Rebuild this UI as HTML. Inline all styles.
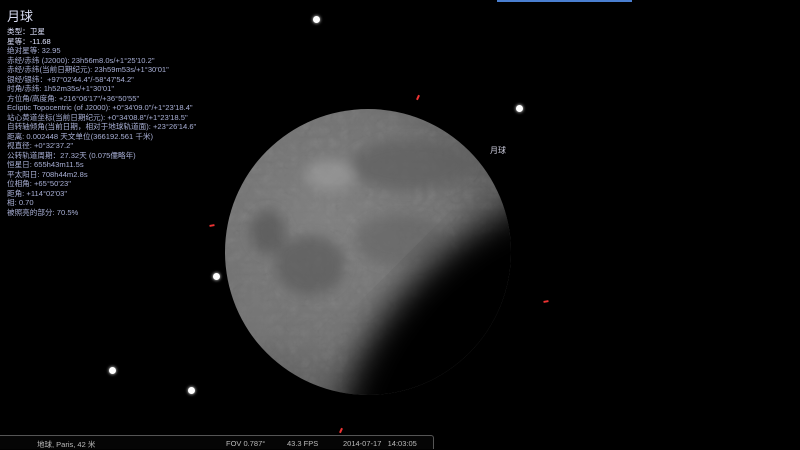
<!DOCTYPE html>
<html><head><meta charset="utf-8"><style>
html,body{margin:0;padding:0;background:#000;width:800px;height:450px;overflow:hidden;position:relative;font-family:"Liberation Sans","Noto Sans CJK SC",sans-serif}
svg{display:block}
#info{position:absolute;left:7px;top:27px;color:#a9b0d6;font-size:7.6px;line-height:9.5px;white-space:nowrap}
#info b{color:#dfe3ff;font-weight:normal}
#title{position:absolute;left:7px;top:6px;color:#d8dcf2;font-size:13px}
.star{position:absolute;width:7px;height:7px;border-radius:50%;background:#fff;box-shadow:0 0 3px #fff}
.red{position:absolute;width:2px;height:5px;background:#e33;transform:rotate(25deg)}
#bar{position:absolute;left:-1px;top:435px;width:433px;height:13px;border:1px solid #555;border-bottom:none;border-radius:0 3px 0 0;background:#050505;color:#bbb;font-size:7.5px}
#bar span{position:absolute;top:3px}
</style></head><body>
<div style="position:absolute;left:497px;top:0;width:135px;height:2px;background:#4a7fd0"></div>
<svg width="800" height="450" style="position:absolute;left:0;top:0">
<defs>
<radialGradient id="g" cx="0.35" cy="0.4" r="0.7">
<stop offset="0" stop-color="#828282"/><stop offset="0.6" stop-color="#737373"/><stop offset="1" stop-color="#525252"/>
</radialGradient>
<filter id="b"><feGaussianBlur stdDeviation="16"/></filter>
<filter id="b2"><feGaussianBlur stdDeviation="6"/></filter>
<filter id="n"><feTurbulence baseFrequency="0.08" numOctaves="3" seed="3"/><feColorMatrix type="saturate" values="0"/></filter>
<clipPath id="c"><circle cx="368" cy="252" r="143"/></clipPath>
</defs>
<circle cx="368" cy="252" r="143" fill="url(#g)"/>
<g clip-path="url(#c)" opacity="0.15"><rect x="225" y="105" width="290" height="290" filter="url(#n)"/></g>
<g clip-path="url(#c)" filter="url(#b2)">
<ellipse cx="268" cy="232" rx="18" ry="22" fill="#555" opacity="0.7"/>
<ellipse cx="310" cy="265" rx="35" ry="30" fill="#5a5a5a" opacity="0.7"/>
<ellipse cx="410" cy="165" rx="60" ry="25" fill="#5e5e5e" opacity="0.7"/>
<ellipse cx="400" cy="240" rx="45" ry="25" fill="#626262" opacity="0.6"/>
<ellipse cx="330" cy="175" rx="25" ry="15" fill="#aaa" opacity="0.5"/>
<ellipse cx="255" cy="320" rx="20" ry="30" fill="#777" opacity="0.5"/>
</g>
<g clip-path="url(#c)">
<ellipse cx="505" cy="360" rx="120" ry="200" transform="rotate(45 505 360)" fill="#050505" filter="url(#b)"/>
</g>
</svg>
<div class="star" style="left:313px;top:16px"></div>
<div class="star" style="left:516px;top:105px"></div>
<div class="star" style="left:213px;top:273px"></div>
<div class="star" style="left:109px;top:367px"></div>
<div class="star" style="left:188px;top:387px"></div>
<div class="red" style="left:417px;top:95px"></div>
<div class="red" style="left:211px;top:223px;transform:rotate(80deg)"></div>
<div class="red" style="left:545px;top:299px;transform:rotate(80deg)"></div>
<div class="red" style="left:340px;top:428px"></div>
<div style="position:absolute;left:490px;top:145px;color:#ccd;font-size:8px">月球</div>
<div id="title">月球</div>
<div id="info">
<b>类型：卫星</b><br><b>星等：-11.68</b><br>绝对星等: 32.95<br>
赤经/赤纬 (J2000): 23h56m8.0s/+1°25'10.2"<br>
赤经/赤纬(当前日期纪元): 23h59m53s/+1°30'01"<br>
银经/银纬：+97°02'44.4"/-58°47'54.2"<br>
时角/赤纬: 1h52m35s/+1°30'01"<br>
方位角/高度角: +216°06'17"/+36°50'55"<br>
Ecliptic Topocentric (of J2000): +0°34'09.0"/+1°23'18.4"<br>
站心黄道坐标(当前日期纪元): +0°34'08.8"/+1°23'18.5"<br>
自转轴倾角(当前日期，相对于地球轨道面): +23°26'14.6"<br>
距离: 0.002448 天文单位(366192.561 千米)<br>
视直径: +0°32'37.2"<br>
公转轨道周期：27.32天 (0.075儒略年)<br>
恒星日: 655h43m11.5s<br>
平太阳日: 708h44m2.8s<br>
位相角: +65°50'23"<br>
距角: +114°02'03"<br>
相: 0.70<br>
被照亮的部分: 70.5%
</div>
<div id="bar">
<span style="left:37px">地球, Paris, 42 米</span>
<span style="left:226px">FOV 0.787°</span>
<span style="left:287px">43.3 FPS</span>
<span style="left:343px">2014-07-17&nbsp;&nbsp;&nbsp;14:03:05</span>
</div>
</body></html>
